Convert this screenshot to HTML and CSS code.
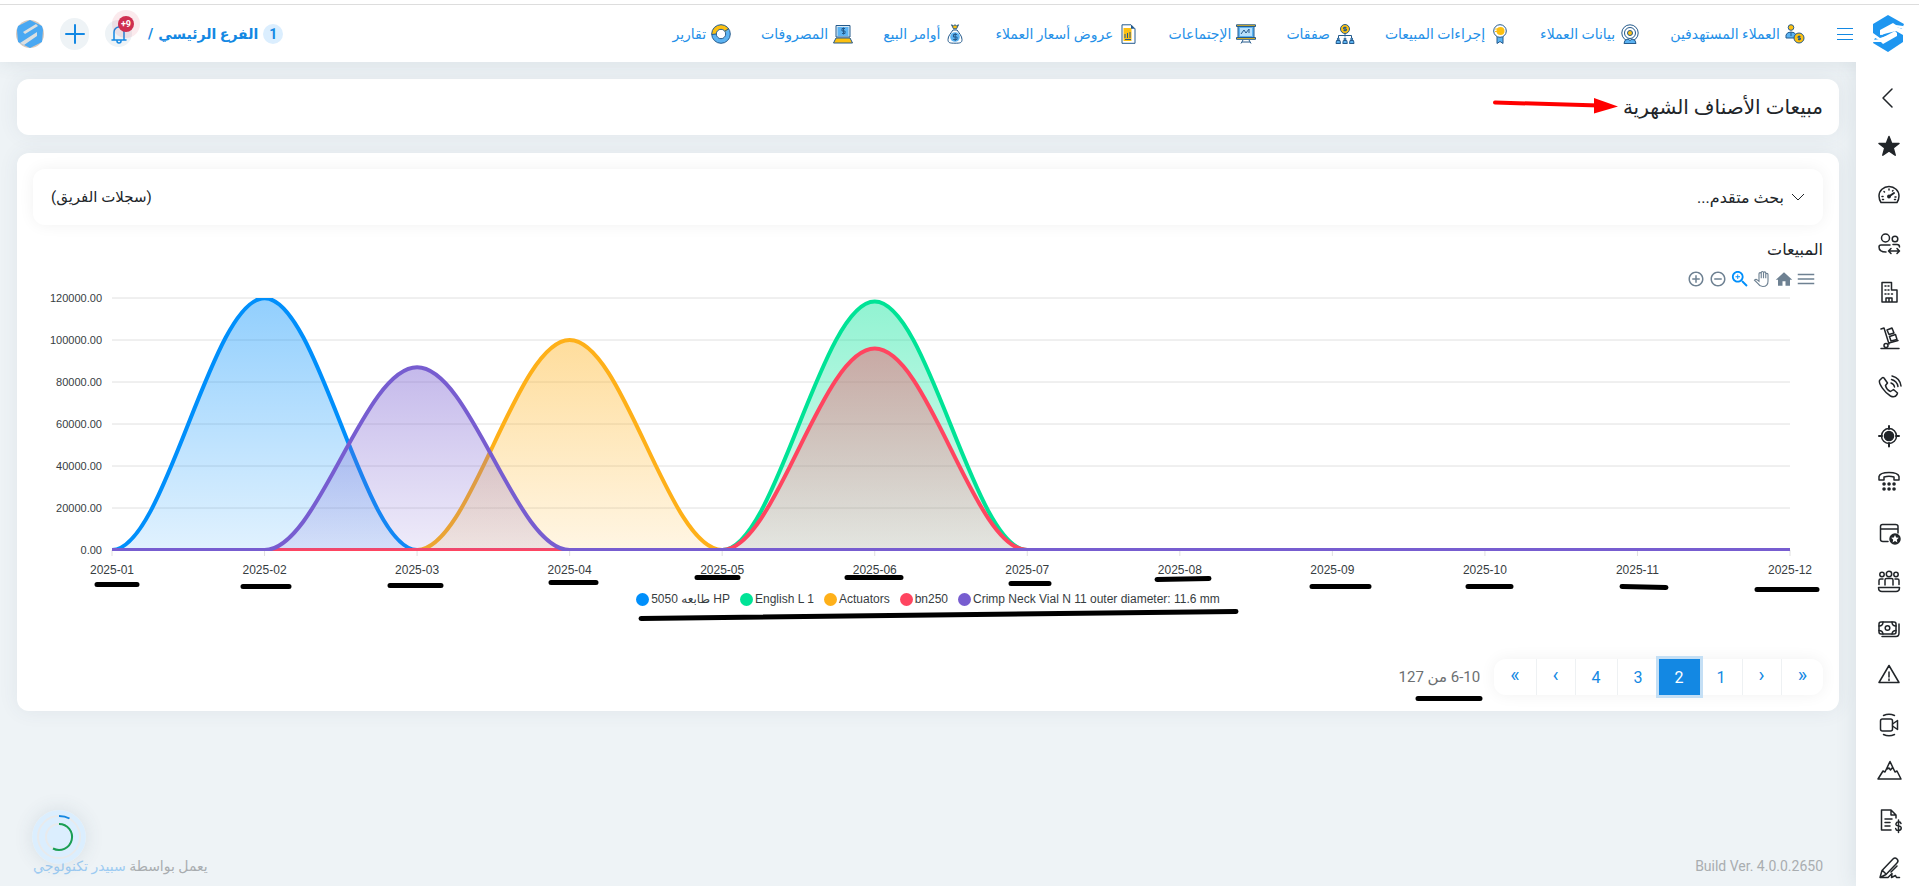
FILE: index.html
```html
<!DOCTYPE html>
<html lang="ar" dir="rtl">
<head>
    <meta charset="UTF-8">
    <meta name="viewport" content="width=device-width, initial-scale=1.0">
    <title>مبيعات الأصناف الشهرية</title>
    <link rel="stylesheet" href="styles.css">
</head>
<body>
    <header class="topbar">
        <a class="logo" href="#" aria-label="الرئيسية">
            <svg width="32" height="37" viewBox="0 0 32 37"><path d="M16 0 32 9 30 14 20 10 8 17V20L24 16 31 20V27L16 37 1 28 3 23 12 27 24 20V18L8 23 1 18V9z" fill="#1e96f0"/><path d="M8 15 21 8 24 10 31 11V14L24 12 10 20 8 19zM1 25 8 24 23 16 25 18V21L11 29 9 27 1 27z" fill="#fff"/></svg>
        </a>
        <button class="menu-btn" aria-label="القائمة"><svg width="16" height="14" viewBox="0 0 16 14"><path d="M0 1.5h16M0 7.5h16M0 12.5h16"/></svg></button>
        <nav class="main-nav">
            <a href="#"><svg viewBox="0 0 20 20"><circle class="y" cx="6" cy="3.5" r="2.8"/><path class="b" d="M1 14V11q1-3 5-3t5 3v3z"/><path class="b" d="M6 8v4"/><circle class="y" cx="14" cy="14" r="5"/><path class="n" d="M15.500 12.500h-2.500v1.500h2.500v1.500h-2.500M14.200 11.500v5"/></svg>العملاء المستهدفين</a>
            <a href="#"><svg viewBox="0 0 20 20"><circle class="n" cx="10" cy="9" r="8.200"/><circle class="n" cx="10" cy="9" r="5.500"/><circle class="y" cx="10" cy="9" r="2.500"/><path class="b" d="M4 19.500q0-4 4-4.500l2 1.500 2-1.500q4 .5 4 4.500z"/></svg>بيانات العملاء</a>
            <a href="#"><svg viewBox="0 0 20 20"><path class="b" d="M7 11v8.500l3-2 3 2V11z"/><circle class="w" cx="10" cy="7" r="6.300"/><circle cx="10.500" cy="7" r="4" fill="#fdc010"/><path d="M5 5h4M5 7.500h3" stroke="#fdc010"/></svg>إجراءات المبيعات</a>
            <a href="#"><svg viewBox="0 0 20 20"><circle class="y" cx="10" cy="5" r="4.500"/><path class="n" d="M11.500 3.500h-3v1.500h3v1.500h-3M10 2.500v5M10 9.500v3M3.500 14v-2.500h13V14"/><path class="b" d="M1 19.500l.5-3h3.500l.5 3zM7.800 19.500l.5-3h3.500l.5 3zM14.500 19.500l.5-3h3.500l.5 3z"/><circle class="b" cx="3.300" cy="15" r="1"/><circle class="b" cx="10" cy="15" r="1"/><circle class="b" cx="16.700" cy="15" r="1"/></svg>صفقات</a>
            <a href="#"><svg viewBox="0 0 20 20"><path class="b" d="M2 2h16v12H2z"/><path class="y" d="M.5.8h19v1.700H.5zM.5 13.500h19v1.800H.5z"/><path d="M4 4h12v8H4z" fill="#b9e0fb"/><path class="n" d="M5 10l3-4 2 3 3-4v4M7 16l-2 3.500M13 16l2 3.500M6 18h8"/></svg>الإجتماعات</a>
            <a href="#"><svg viewBox="0 0 20 20"><path class="w" d="M4 .8h9l4 4V19.300H4z"/><path d="M5.500 4h8v13h-8z" fill="#fdc010"/><path d="M13 .8v4h4z" fill="#245a8c"/><path class="n" d="M7 14v-4M9.500 14V9M12 14V8M7 15.500h6"/></svg>عروض أسعار العملاء</a>
            <a href="#"><svg viewBox="0 0 20 20"><path class="y" d="M6.500.8l2 1 1.500-1 1.500 1 2-1-2 4h-3z"/><path class="w" d="M8 6h4c2 3 5 6 5 9.500s-2 3.700-7 3.700-7-.2-7-3.700S6 9 8 6z"/><circle cx="10" cy="13" r="4.800" fill="#5cb3f2"/><path class="n" d="M12 10.500H8.500V13H12v2.500H8.200M10.200 9v8"/></svg>أوامر البيع</a>
            <a href="#"><svg viewBox="0 0 20 20"><path class="n" d="M3 1.500h14V13H3z" fill="#dcebf5"/><path d="M4.500 3h11v9h-11z" fill="#5cb3f2"/><path class="n" d="M12 4.500H9v2.500h3v2.500H9M10.500 3.500v7"/><path class="y" d="M3 14h14l2.500 5H.5z"/></svg>المصروفات</a>
            <a href="#"><svg viewBox="0 0 20 20"><circle cx="10" cy="10" r="7" stroke="#5cb3f2" stroke-width="4.500" fill="none"/><path d="M3 10a7 7 0 0 1 13-3.500" stroke="#fdc010" stroke-width="4.500" fill="none"/><circle class="n" cx="10" cy="10" r="9.300"/><circle class="w" cx="10" cy="10" r="4.700"/><path class="n" d="M.8 10.500 5.300 10M14 7l4-2.500"/></svg>تقارير</a>
        </nav>
        <div class="user-area">
            <div class="branch"><span class="branch-count">1</span><a href="#">الفرع الرئيسي</a><span>/</span></div>
            <button class="round-btn bell" aria-label="الإشعارات">
                <svg width="18" height="20" viewBox="0 0 18 20"><path d="M2 16h14M4 16V8a5 5 0 0 1 10 0v8M9 3V1M7 17a2 2 0 0 0 4 0"/></svg>
                <span class="badge">9+</span>
            </button>
            <button class="round-btn plus" aria-label="إضافة"><svg width="20" height="20" viewBox="0 0 20 20"><path d="M10 1v18M1 10h18"/></svg></button>
            <a class="avatar" href="#" aria-label="الحساب"><svg width="28" height="28" viewBox="0 0 28 28"><circle cx="14" cy="14" r="14" fill="#d9c9bd"/><path d="M14 0 26 6l1 4-1 12-12 6L2 22 1 10l1-4z" fill="#4aa8f2"/><path d="M7 12 20 4l2 2-13 8zM4 23l17-11v4L8 25z" fill="#dcdfe0"/></svg></a>
        </div>
    </header>

    <div class="layout">
        <aside class="sidebar">
            <a href="#" aria-label="طي"><svg viewBox="0 0 24 24"><path d="M15 3 6 12l9 9"/></svg></a>
            <a href="#" aria-label="المفضلة"><svg viewBox="0 0 24 24"><path fill="#212529" d="M12 2.500l2.700 7h7.300l-5.800 4.500 2 7.200L12 17l-6.200 4.200 2-7.200L2 9.500h7.300z"/></svg></a>
            <a href="#" aria-label="لوحة المعلومات"><svg viewBox="0 0 24 24"><path d="M4 20.500h16c1.300-2 2-4 2-6.500a10 9.500 0 0 0-20 0c0 2.500.7 4.500 2 6.500z"/><path d="M12 14.500l5-3.500" stroke-width="2"/><circle cx="12" cy="14.500" r="1.200" fill="#212529"/><path d="M5 14.500h1M18 15h1M7 9.500l.5.5M12 7v1M16 8.500l-.5.5M5.500 17.500h1M17.500 17.500h1"/></svg></a>
            <a href="#" aria-label="العملاء"><svg viewBox="0 0 24 24"><circle cx="8.500" cy="8" r="4"/><circle cx="18" cy="9" r="2.800"/><path d="M13 15H4q-2 0-2 2 0 5 7 5M16 14.500h4q2.500 0 2.500 2.500M12 21h10M14 18.500 11.500 21l2.500 2.500M20 18.500l2.500 2.500-2.500 2.500"/></svg></a>
            <a href="#" aria-label="الفروع"><svg viewBox="0 0 24 24"><path d="M5 24V4.500h9.500V12H20v12zM9 24v-4h6v4M12 20v4"/><path d="M8 8h1M11 8h1M8 12h1M11 12h1M8 16h1M11 16h1M14.500 16h1"/></svg></a>
            <a href="#" aria-label="المخزون"><svg viewBox="0 0 24 24"><path d="M4 22.500h18M4 3l3-1 5 16M12 17l9-2.500"/><circle cx="9" cy="19.500" r="2"/><path d="M10 4l5-2 2 5-5 1.500zM12.500 10.500l6-2 1.500 5-6 1.500z"/></svg></a>
            <a href="#" aria-label="المكالمات"><svg viewBox="0 0 24 24"><path d="M5 4 2.500 6.500c-1 3 5 12 11 15.500 3 1.500 5 1 6.500-1.500l.5-1.500-4-3.500-3 2c-2.500-1-4.500-4-5-6l2-2.500L7 4q-1-1-2 0z"/><path d="M14 9q3 1 3.500 4M14.500 5.500Q20 7 21 12.500M15 2q8 2 9 10"/></svg></a>
            <a href="#" aria-label="الأهداف"><svg viewBox="0 0 24 24"><circle cx="12" cy="14" r="7.500"/><circle cx="12" cy="14" r="4.500" fill="#212529"/><path d="M12 4v3M12 21v3.500M2 14h3M19 14h3" stroke-width="2"/></svg></a>
            <a href="#" aria-label="الهاتف"><svg viewBox="0 0 24 24"><path d="M2 10V6.500q1-4 10-4t10 4V10h-5V7q-5-1.500-10 0v3z"/><path d="M7 14h.1M12 14h.1M17 14h.1M7 19h.1M12 19h.1M17 19h.1" stroke-width="3.500"/></svg></a>
            <a href="#" aria-label="المتصفح"><svg viewBox="0 0 24 24"><path d="M11 23.500H6q-2.500 0-2.500-2V8.500q0-2 2-2h13q2.500 0 2.500 2V15M3.500 11H21"/><circle cx="18" cy="21" r="5" fill="#212529"/><path d="M18 17l1.200 2.500 2.600.3-2 1.900.6 2.700-2.400-1.400-2.400 1.400.6-2.700-2-1.900 2.600-.3z" fill="#fff" stroke="none"/></svg></a>
            <a href="#" aria-label="الفريق"><svg viewBox="0 0 24 24"><circle cx="12" cy="8" r="2.700"/><circle cx="5" cy="8.500" r="2.200"/><circle cx="19" cy="8.500" r="2.200"/><path d="M8 19v-5q0-1.500 1.500-1.500h5q1.500 0 1.500 1.500v5M2 18.500v-4q0-1.500 1.500-1.500H6M22 18.500v-4q0-1.500-1.500-1.500H18M1.500 21.500h21q0 4-3.500 4H5q-3.500 0-3.500-4z"/></svg></a>
            <a href="#" aria-label="المالية"><svg viewBox="0 0 24 24"><rect x="2" y="8" width="17" height="12" rx="2"/><circle cx="10.500" cy="14" r="2.300"/><path d="M2 12q4 0 4-4M19 12q-4 0-4-4M2 16.500q3.500 0 4 3.500M19 16.500q-3.500 0-4 3.500M22 10v9q0 3.500-3 3.500H5"/></svg></a>
            <a href="#" aria-label="التنبيهات"><svg viewBox="0 0 24 24"><path d="M12 3.500 22 20.500H2zM12 10v5M12 17v1.500"/></svg></a>
            <a href="#" aria-label="الاجتماعات المرئية"><svg viewBox="0 0 24 24"><rect x="3.500" y="9" width="12" height="12" rx="2"/><path d="M15.500 14l5-3.500v9L15.500 16M6.500 5.500q5.500-2.500 11 0M6.500 24.500q5.500 2.500 11 0"/></svg></a>
            <a href="#" aria-label="الفرص"><svg viewBox="0 0 24 24"><path d="M1 21 6 13l2 1L13 3.500l5 10.500 2-1 4 8zM10 11l2-1 1.500 2 1.500-2 1.500 1"/></svg></a>
            <a href="#" aria-label="الفواتير"><svg viewBox="0 0 24 24"><path d="M14 24H4.500V4H14l5 5v3M14 4v5h5M8 13h7M8 16.500h5M8 20h5"/><path d="M24 17.500q-.5-1.800-2.500-1.800T19 17.700t2.500 2.300 2.700 2.300-2.700 2.200-2.800-1.900M21.500 14v12.500"/></svg></a>
            <a href="#" aria-label="التوقيع"><svg viewBox="0 0 24 24"><path d="M3 23.500l2-7L16 5q2-2 4 0t0 4L9 20.500zM5.500 16.500 9 20M20 12l-6 6M3 23.500h8l4-4-.5 4 4-2 1 2h3"/></svg></a>
        </aside>

        <main class="content">
            <section class="card page-title">
                <h1>مبيعات الأصناف الشهرية</h1>
            </section>

            <section class="card">
                <div class="search-box">
                    <button class="search-toggle"><svg width="14" height="14" viewBox="0 0 14 14"><path d="M1 4l6 6 6-6"/></svg>بحث متقدم...</button>
                    <span>(سجلات الفريق)</span>
                </div>

                <h2>المبيعات</h2>
                <div class="chart-tools">
                    <button aria-label="القائمة"><svg viewBox="0 0 24 24"><path d="M1 19h22v-2H1v2zm0-6h22v-2H1v2zm0-8v2h22V5H1z"/></svg></button>
                    <button aria-label="إعادة ضبط"><svg viewBox="0 0 24 24"><path d="M10 21v-6h4v6h6v-8h3L12 3 1 13h3v8z"/></svg></button>
                    <button aria-label="تحريك"><svg viewBox="0 0 24 24"><path d="M8 14V5q0-1.500 1.500-1.500T11 5v6V3.500Q11 2 12.500 2T14 3.500V11 4q0-1.500 1.500-1.500T17 4v7-5q0-1.500 1.500-1.500T20 6v9q0 7-7 7-4 0-6-3.500L2 13.500q2-2 4 0l2 1.500z" fill="#fff" stroke="#6e8192" stroke-width="1.500"/></svg></button>
                    <button class="active" aria-label="تكبير التحديد"><svg viewBox="2 2 20 20"><path d="M15.500 14h-.79l-.28-.27C15.410 12.590 16 11.110 16 9.500 16 5.910 13.090 3 9.500 3S3 5.910 3 9.500 5.910 16 9.500 16c1.610 0 3.090-.59 4.230-1.570l.27.28v.79l5 4.990L20.490 19l-4.990-5zm-6 0C7.010 14 5 11.990 5 9.500S7.010 5 9.500 5 14 7.010 14 9.500 11.990 14 9.500 14zm2.500-4h-2v2H9v-2H7V9h2V7h1v2h2v1z"/></svg></button>
                    <button aria-label="تصغير"><svg viewBox="0 0 24 24"><path d="M7 11v2h10v-2H7zm5-9C6.480 2 2 6.480 2 12s4.480 10 10 10 10-4.480 10-10S17.520 2 12 2zm0 18c-4.410 0-8-3.590-8-8s3.590-8 8-8 8 3.590 8 8-3.590 8-8 8z"/></svg></button>
                    <button aria-label="تكبير"><svg viewBox="0 0 24 24"><path d="M13 7h-2v4H7v2h4v4h2v-4h4v-2h-4V7zm-1-5C6.480 2 2 6.480 2 12s4.480 10 10 10 10-4.480 10-10S17.520 2 12 2zm0 18c-4.410 0-8-3.590-8-8s3.590-8 8-8 8 3.590 8 8-3.590 8-8 8z"/></svg></button>
                </div>
                <svg id="chart" class="chart" viewBox="0 0 1790 290" direction="ltr"></svg>
                <ul id="legend" class="legend" dir="ltr"></ul>

                <div class="pager">
                    <nav class="pages">
                        <button class="jump">«</button>
                        <button class="jump">‹</button>
                        <button>1</button>
                        <button class="current">2</button>
                        <button>3</button>
                        <button>4</button>
                        <button class="jump">›</button>
                        <button class="jump">»</button>
                    </nav>
                    <span class="range">6-10 من 127</span>
                </div>
            </section>

            <footer class="footer">
                <span dir="ltr">Build Ver. 4.0.0.2650</span>
                <span>يعمل بواسطة <a href="#">سبيدر تكنولوجي</a></span>
            </footer>
        </main>
    </div>

    <svg class="progress" viewBox="0 0 54 54">
        <circle cx="27" cy="27" r="27" fill="#dbeefe"/>
        <circle cx="27" cy="27" r="21" stroke="#e8eaec"/>
        <circle cx="27" cy="27" r="13" stroke="#e8eaec"/>
        <path d="M27 6q6 0 10.500 2.500" stroke="#1388e3"/>
        <path d="M27 14a13 13 0 1 1-6 24.500" stroke="#1a9f55"/>
    </svg>

    <!-- hand-drawn marks over the page -->
    <svg class="marks" viewBox="0 0 1919 886">
        <path d="M97 584.500h40M243 586.500h46M390 585.500h51M551 582.500h45M697 577.500h41M847 577.500h54M1011 583.500h38M1157 579.500l52-1M1312 586.500h57M1468 586.500h43M1622 586.500l44 1M1757 589.500h60M641 618.500l595-7M1418 698.500h62"/>
        <path class="arrow" d="M1495 102.500l104 3"/>
        <path class="arrow-head" d="M1594 98l24 8.500-24 7z"/>
    </svg>

    <script>
        const months = 12;
        const left = 79, right = 1757, top_ = 8, bottom = 260, max = 120000;
        const series = [
            { name: "5050 طابعه HP", color: "#008FFB", data: { 2: 119900 } },
            { name: "English L 1", color: "#00E396", data: { 6: 118300 } },
            { name: "Actuators", color: "#FEB019", data: { 4: 100000 } },
            { name: "bn250", color: "#FF4560", data: { 6: 95900 } },
            { name: "Crimp Neck Vial N 11 outer diameter: 11.6 mm", color: "#775DD0", data: { 3: 87000 } }
        ];
        const step = (right - left) / (months - 1);
        const x = m => left + (m - 1) * step;
        const y = v => bottom - v / max * (bottom - top_);

        function linePath(data) {
            let d = `M${x(1)} ${y(data[1] || 0)}`;
            for (let m = 2; m <= months; m++) {
                const y0 = y(data[m - 1] || 0), y1 = y(data[m] || 0);
                d += `C${x(m - 1) + step * 0.35} ${y0} ${x(m) - step * 0.35} ${y1} ${x(m)} ${y1}`;
            }
            return d;
        }

        let svg = `<defs><clipPath id="plot"><rect x="${left}" y="${top_}" width="${right - left}" height="${bottom - top_ + 1}"/></clipPath>`;
        series.forEach((s, i) => {
            svg += `<linearGradient id="fill${i}" x1="0" y1="0" x2="0" y2="1"><stop offset="0" stop-color="${s.color}" stop-opacity="0.43"/><stop offset="1" stop-color="${s.color}" stop-opacity="0.12"/></linearGradient>`;
        });
        svg += "</defs>";

        for (let v = 0; v <= max; v += 20000) {
            svg += `<path class="grid" d="M${left} ${y(v)}H${right}"/><text class="y-label" x="69" y="${y(v) + 4}">${v.toFixed(2)}</text>`;
        }
        for (let m = 1; m <= months; m++) {
            svg += `<path class="tick" d="M${x(m)} ${bottom}v6"/><text class="x-label" x="${x(m)}" y="284">2025-${String(m).padStart(2, "0")}</text>`;
        }
        svg += `<g clip-path="url(#plot)">`;
        series.forEach((s, i) => {
            const d = linePath(s.data);
            svg += `<path d="${d}V${bottom}H${left}z" fill="url(#fill${i})"/><path class="line" d="${d}" stroke="${s.color}"/>`;
        });
        svg += "</g>";
        document.getElementById("chart").innerHTML = svg;

        document.getElementById("legend").innerHTML = series.map(s =>
            `<li><i style="background:${s.color}"></i>${s.name}</li>`
        ).join("");
    </script>
</body>
</html>
```
FILE: styles.css
```css
* { box-sizing: border-box; }
body { margin: 0; height: 100vh; display: flex; flex-direction: column; overflow: hidden; position: relative; background: #eef3f6; color: #212529; font-family: Roboto, "DejaVu Sans", sans-serif; font-size: 16px; }
a { color: #1388e3; text-decoration: none; }
button { font: inherit; color: inherit; background: none; border: none; padding: 0; cursor: pointer; }
h1, h2 { margin: 0; font-weight: normal; }
svg { display: block; fill: none; flex: none; }

.topbar { display: flex; align-items: center; height: 58px; margin-top: 4px; background: #fff; border-top: 1px solid #ddd; box-shadow: 0 -4px 0 #fff, 0 0 20px rgba(60, 80, 100, 0.12); position: relative; z-index: 2; }
.logo { width: 63px; display: flex; justify-content: center; }
.menu-btn svg { stroke: #1388e3; stroke-width: 1; margin-right: 3px; }
.main-nav { display: flex; gap: 30px; margin-right: 32px; }
.main-nav a { display: flex; align-items: center; gap: 5px; font-size: 14px; line-height: 24px; white-space: nowrap; color: #2490e8; }
.main-nav svg { width: 20px; height: 20px; }
.main-nav .y { fill: #fdc010; stroke: #245a8c; }
.main-nav .b { fill: #5cb3f2; stroke: #245a8c; }
.main-nav .w { fill: #fff; stroke: #245a8c; }
.main-nav .n { stroke: #245a8c; }

.user-area { display: flex; align-items: center; gap: 16px; margin-right: auto; margin-left: 16px; }
.branch { display: flex; align-items: center; gap: 5px; font-size: 14px; font-weight: bold; color: #1388e3; }
.branch-count { width: 20px; height: 20px; border-radius: 50%; background: #dbeefe; line-height: 20px; text-align: center; }
.round-btn { position: relative; height: 32px; width: 29px; border-radius: 15px; background: #eef3f6; display: flex; align-items: center; justify-content: center; }
.round-btn svg { stroke: #1388e3; stroke-width: 2; stroke-linecap: round; }
.bell { width: 27px; height: 27px; }
.bell svg { stroke-width: 1.5; }
.badge { position: absolute; top: -4px; right: -2px; width: 16px; height: 16px; border-radius: 50%; background: #cf2e50; color: #fff; font-size: 9px; font-weight: bold; line-height: 16px; box-shadow: 0 0 0 6px rgba(220, 53, 80, 0.1); }

.layout { flex: 1; display: flex; min-height: 0; }
.sidebar { width: 63px; flex: none; padding-top: 12px; background: #fff; overflow: hidden; position: relative; z-index: 3; box-shadow: 0 0 20px rgba(60, 80, 100, 0.12); clip-path: inset(0 0 0 -20px); }
.sidebar a { display: flex; height: 48px; align-items: center; justify-content: center; }
.sidebar svg { width: 24px; height: 24px; overflow: visible; stroke: #212529; stroke-width: 1.5; stroke-linecap: round; stroke-linejoin: round; margin-left: 3px; }

.content { flex: 1; min-width: 0; display: flex; flex-direction: column; gap: 18px; padding: 17px 17px 8px; }
.card { background: #fff; border-radius: 12px; padding: 16px; box-shadow: 0 0 20px rgba(60, 80, 100, 0.08); }
.page-title { padding: 12px 16px; }
.page-title h1 { font-size: 20px; line-height: 32px; }
.search-box { display: flex; justify-content: space-between; align-items: center; height: 56px; padding: 0 18px; border-radius: 12px; font-size: 15px; box-shadow: 0 0 16px rgba(0, 0, 0, 0.06); }
.search-toggle { display: flex; align-items: center; gap: 7px; font-size: 16px; }
.search-toggle svg { stroke: #212529; }
.card h2 { margin-top: 12px; font-size: 16px; line-height: 26px; }

.chart-tools { display: flex; align-items: center; gap: 4px; height: 22px; margin-top: 5px; padding-right: 8px; }
.chart-tools svg { width: 18px; height: 18px; fill: #6e8192; }
.chart-tools .active svg { fill: #008ffb; }
.chart { width: 100%; height: auto; font-family: "Liberation Sans", Arial, sans-serif; }
.chart text { fill: #373d3f; }
.chart .grid { stroke: #e0e0e0; }
.chart .tick { stroke: #e0e0e0; }
.chart .line { stroke-width: 4; }
.chart .y-label { font-size: 11px; text-anchor: end; }
.chart .x-label { font-size: 12px; text-anchor: middle; }
.legend { display: flex; justify-content: center; gap: 10px; margin: 9px 0 0; padding: 0; list-style: none; font: 12px/20px "Liberation Sans", Arial, "DejaVu Sans", sans-serif; color: #373d3f; }
.legend li { display: flex; align-items: center; gap: 2px; white-space: pre; }
.legend i { width: 13px; height: 13px; border-radius: 50%; }

.pager { display: flex; align-items: center; gap: 14px; margin-top: 50px; }
.pages { display: flex; height: 36px; border-radius: 12px; box-shadow: 0 0 16px rgba(0, 0, 0, 0.06); }
.pages button { padding: 0 16px; color: #1388e3; border-left: 1px solid #eef1f3; }
.pages .jump { font-size: 20px; line-height: 32px; padding-bottom: 4px; }
.pages button:last-child { border-left: none; }
.pages .current { background: #1388e3; color: #fff; border: none; box-shadow: 0 0 0 3px #c4dff5; z-index: 1; }
.range { font-size: 15px; color: #6c6f72; }

.footer { display: flex; justify-content: space-between; margin-top: auto; padding: 0 16px; line-height: 24px; font-size: 14px; color: #a9adb0; }
.footer a { color: #9dcbf2; }
.progress { position: absolute; left: 32px; bottom: 22px; width: 54px; height: 54px; border-radius: 50%; stroke-width: 2; box-shadow: 0 0 20px rgba(60, 80, 100, 0.12); z-index: 1; }
.marks { position: absolute; top: 0; left: 0; width: 100%; z-index: 5; pointer-events: none; stroke: #000; stroke-width: 5; stroke-linecap: round; }
.marks .arrow { stroke: #f00; stroke-width: 4; }
.marks .arrow-head { fill: #f00; stroke: none; }
```
